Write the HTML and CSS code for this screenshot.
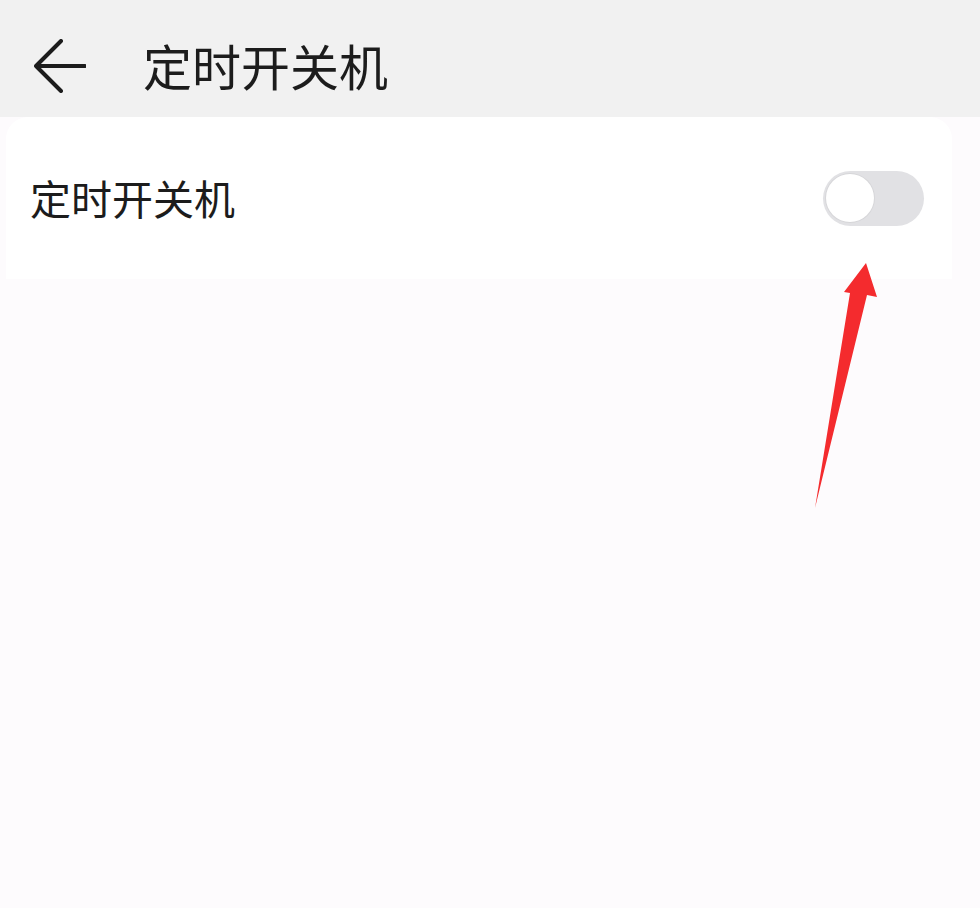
FILE: index.html
```html
<!DOCTYPE html>
<html lang="zh-CN">
<head>
<meta charset="utf-8">
<title>定时开关机</title>
<link rel="stylesheet" href="styles.css">
</head>
<body>
<div class="page">
  <header class="topbar">
    <svg class="back" width="52" height="54" viewBox="0 0 52 54" aria-hidden="true">
      <path d="M27 2 L2 27 L27 52 M2 27 H51" fill="none" stroke="#1c1c1c" stroke-width="4" stroke-linecap="round" stroke-linejoin="round"/>
    </svg>
    <h1 class="title">定时开关机</h1>
  </header>
  <section class="card">
    <div class="row">
      <span class="label">定时开关机</span>
      <span class="switch"><span class="knob"></span></span>
    </div>
  </section>
  <svg class="annot" width="980" height="908" viewBox="0 0 980 908" aria-hidden="true">
    <polygon points="866,263 877,297 867,295 815,508 850,293 844,292" fill="#f42b2e"/>
  </svg>
</div>
</body>
</html>
```
FILE: styles.css
```css
html, body {
  margin: 0;
  padding: 0;
}
body {
  background: #fdfbfd;
  font-family: "Noto Sans CJK SC", "Noto Sans", sans-serif;
  color: #1c1c1c;
}
.page {
  position: relative;
  width: 980px;
  height: 908px;
  overflow: hidden;
}
.topbar {
  height: 117px;
  background: #f1f1f1;
  display: flex;
  align-items: center;
  padding: 16px 0 0 34px;
  box-sizing: border-box;
}
.back {
  display: block;
  margin-top: -2px;
}
.title {
  margin: -4px 0 0 57px;
  font-size: 49px;
  font-weight: 400;
  line-height: 1;
}
.card {
  margin: 0 28px 0 6px;
  height: 162px;
  background: #ffffff;
  border-radius: 22px 22px 0 0;
  display: flex;
  align-items: center;
}
.row {
  flex: 1;
  display: flex;
  align-items: center;
  justify-content: space-between;
  padding: 0 28px 0 24px;
}
.label {
  font-size: 41px;
  line-height: 1;
  margin-top: -2px;
}
.switch {
  width: 101px;
  height: 55px;
  border-radius: 28px;
  background: #e1e1e4;
  display: flex;
  align-items: center;
  padding-left: 3px;
  box-sizing: border-box;
}
.knob {
  width: 48px;
  height: 48px;
  border-radius: 50%;
  background: #ffffff;
  box-shadow: 0 0 0 1px #d6d6d9;
}
.annot {
  position: absolute;
  left: 0;
  top: 0;
  pointer-events: none;
}
```
